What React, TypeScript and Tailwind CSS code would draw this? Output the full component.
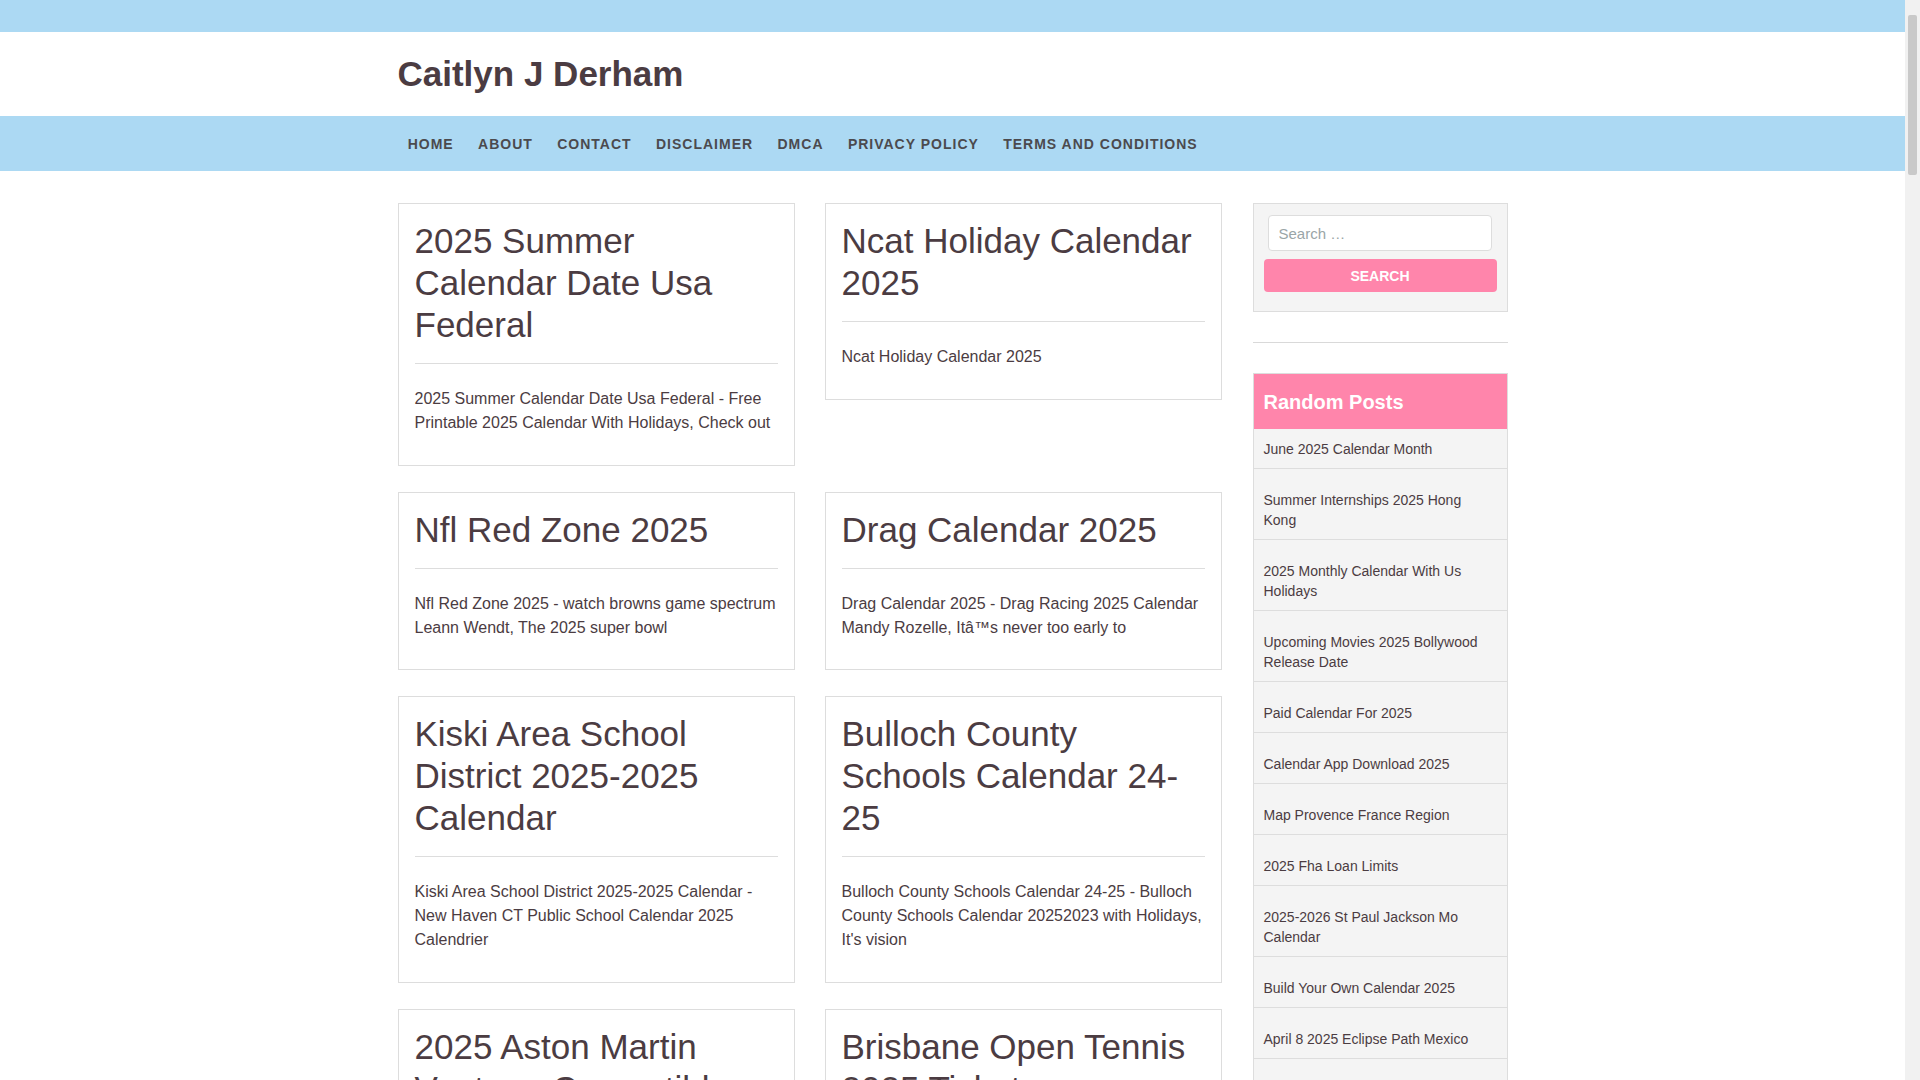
const NAV_ITEMS = ["Home", "About", "Contact", "Disclaimer", "DMCA", "Privacy Policy", "Terms and Conditions"];

const POSTS = [
  {
    title: "2025 Summer Calendar Date Usa Federal",
    excerpt: "2025 Summer Calendar Date Usa Federal - Free Printable 2025 Calendar With Holidays, Check out",
  },
  { title: "Ncat Holiday Calendar 2025", excerpt: "Ncat Holiday Calendar 2025" },
  {
    title: "Nfl Red Zone 2025",
    excerpt: "Nfl Red Zone 2025 - watch browns game spectrum Leann Wendt, The 2025 super bowl",
  },
  {
    title: "Drag Calendar 2025",
    excerpt: "Drag Calendar 2025 - Drag Racing 2025 Calendar Mandy Rozelle, Itâ™s never too early to",
  },
  {
    title: "Kiski Area School District 2025-2025 Calendar",
    excerpt: "Kiski Area School District 2025-2025 Calendar - New Haven CT Public School Calendar 2025 Calendrier",
  },
  {
    title: "Bulloch County Schools Calendar 24-25",
    excerpt: "Bulloch County Schools Calendar 24-25 - Bulloch County Schools Calendar 20252023 with Holidays, It's vision",
  },
  {
    title: "2025 Aston Martin Vantage Convertible",
    excerpt: "2025 Aston Martin Vantage Convertible - Aston Martin Vantage Roadster 2025 Price, Specs and Review",
  },
  {
    title: "Brisbane Open Tennis 2025 Tickets",
    excerpt: "Brisbane Open Tennis 2025 Tickets - Brisbane International 2025 Tickets, Dates and Draw",
  },
];

const RANDOM_POSTS = [
  "June 2025 Calendar Month",
  "Summer Internships 2025 Hong Kong",
  "2025 Monthly Calendar With Us Holidays",
  "Upcoming Movies 2025 Bollywood Release Date",
  "Paid Calendar For 2025",
  "Calendar App Download 2025",
  "Map Provence France Region",
  "2025 Fha Loan Limits",
  "2025-2026 St Paul Jackson Mo Calendar",
  "Build Your Own Calendar 2025",
  "April 8 2025 Eclipse Path Mexico",
  "Printable 2025 Calendar With Holidays",
];

function PostCard({ title, excerpt }: { title: string; excerpt: string }) {
  return (
    <article className="border border-[#dddddd] bg-white p-4 pb-[29.5px]">
      <h2 className="text-[35px] font-normal leading-[42px]">
        <a href="#">{title}</a>
      </h2>
      <div className="mt-[17px] h-px bg-[#dddddd]" />
      <p className="mt-[23px] text-base leading-6">{excerpt}</p>
    </article>
  );
}

export default function App() {
  return (
    <div className="min-h-screen bg-white pr-[15px] font-['Liberation_Sans',Arial,sans-serif] text-[#4b3c42]">
      {/* page scrollbar, as in the screenshot */}
      <div className="fixed right-0 top-0 z-10 flex h-screen w-[15px] flex-col bg-[#f1f1f1]">
        <div className="h-[15px]" />
        <div className="mx-[3px] h-[160px] rounded-[2px] bg-[#c9c9c9]" />
      </div>

      <div className="h-8 bg-[#acd9f3]" />

      <header className="h-[84px]">
        <div className="mx-auto flex h-full w-[1110px] items-center pb-[2px]">
          <h1 className="text-[35px] font-bold leading-none">
            <a href="#">Caitlyn J Derham</a>
          </h1>
        </div>
      </header>

      <nav className="h-[55px] bg-[#acd9f3]">
        <ul className="mx-auto flex h-full w-[1110px] items-center">
          {NAV_ITEMS.map((item, i) => (
            <li key={item} className={i === 0 ? "-ml-[2px]" : ""}>
              <a
                href="#"
                className="block px-[12.2px] text-sm font-bold uppercase tracking-[1px] text-[#4b4a4e]"
              >
                {item}
              </a>
            </li>
          ))}
        </ul>
      </nav>

      <main className="mx-auto mt-8 flex w-[1110px] items-start gap-[31px] pb-10">
        <div className="grid w-[824px] grid-cols-2 items-start gap-x-[30px] gap-y-[26px]">
          {POSTS.map((p) => (
            <PostCard key={p.title} title={p.title} excerpt={p.excerpt} />
          ))}
        </div>

        <aside className="w-[255px]">
          <div className="border border-[#dddddd] bg-[#f4f4f4] pt-[11px] pb-[19px]">
            <input
              type="search"
              placeholder="Search …"
              className="ml-[14px] block h-9 w-[224px] rounded border border-[#dddddd] bg-white px-[10px] text-[15px] outline-none placeholder:text-[#9aa5a7]"
            />
            <button className="ml-[10px] mt-2 block h-[33px] w-[233px] rounded bg-[#ff85ab] text-sm font-bold uppercase text-white">
              Search
            </button>
          </div>

          <div className="mt-[30px] h-px bg-[#d9d9d9]" />

          <div className="mt-[30px] border border-[#dddddd] bg-[#f4f4f4]">
            <h3 className="flex h-[55px] items-center bg-[#ff85ab] px-[10px] text-[20px] font-bold text-white">
              Random Posts
            </h3>
            <ul>
              {RANDOM_POSTS.map((item, i) => (
                <li
                  key={item}
                  className={
                    "border-b border-[#dddddd] pl-[10px] pr-[15px] pb-[9px] text-sm leading-5 " +
                    (i === 0 ? "pt-[10px]" : "pt-[21px]")
                  }
                >
                  <a href="#">{item}</a>
                </li>
              ))}
            </ul>
          </div>
        </aside>
      </main>
    </div>
  );
}
